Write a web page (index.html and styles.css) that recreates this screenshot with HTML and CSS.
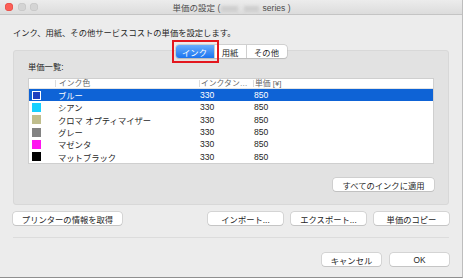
FILE: index.html
```html
<!DOCTYPE html>
<html lang="ja">
<head>
<meta charset="UTF-8">
<title>単価の設定</title>
<link rel="stylesheet" href="styles.css">
</head>
<body>
<div class="window">
  <div class="titlebar">
    <div class="lights">
      <span class="light close"></span>
      <span class="light"></span>
      <span class="light"></span>
    </div>
    <div class="title">単価の設定 (<span class="blur"><i></i><i></i></span> series )</div>
  </div>

  <div class="content">
    <p class="intro">インク、用紙、その他サービスコストの単価を設定します。</p>

    <div class="tabs-row">
      <div class="tabs">
        <span class="tab active">インク</span>
        <span class="tab">用紙</span>
        <span class="tab">その他</span>
      </div>
    </div>

    <div class="group">
      <div class="group-label">単価一覧:</div>
      <div class="table">
        <div class="row head">
          <span class="c-sw"></span>
          <span class="c-name">インク色</span>
          <span class="c-tank">インクタン…</span>
          <span class="c-price">単価 [¥]</span>
        </div>
        <div class="row selected">
          <span class="c-sw"><i class="sw" style="background:#1f3fbf"></i></span>
          <span class="c-name">ブルー</span>
          <span class="c-tank">330</span>
          <span class="c-price">850</span>
        </div>
        <div class="row">
          <span class="c-sw"><i class="sw" style="background:#16d0ff"></i></span>
          <span class="c-name">シアン</span>
          <span class="c-tank">330</span>
          <span class="c-price">850</span>
        </div>
        <div class="row">
          <span class="c-sw"><i class="sw" style="background:#bfbd8c"></i></span>
          <span class="c-name">クロマ オプティマイザー</span>
          <span class="c-tank">330</span>
          <span class="c-price">850</span>
        </div>
        <div class="row">
          <span class="c-sw"><i class="sw" style="background:#828282"></i></span>
          <span class="c-name">グレー</span>
          <span class="c-tank">330</span>
          <span class="c-price">850</span>
        </div>
        <div class="row">
          <span class="c-sw"><i class="sw" style="background:#ff14f0"></i></span>
          <span class="c-name">マゼンタ</span>
          <span class="c-tank">330</span>
          <span class="c-price">850</span>
        </div>
        <div class="row">
          <span class="c-sw"><i class="sw" style="background:#000000"></i></span>
          <span class="c-name">マットブラック</span>
          <span class="c-tank">330</span>
          <span class="c-price">850</span>
        </div>
      </div>
      <div class="apply-row">
        <button class="btn apply">すべてのインクに適用</button>
      </div>
    </div>

    <div class="actions">
      <button class="btn printer">プリンターの情報を取得</button>
      <span class="spacer"></span>
      <button class="btn wide">インポート...</button>
      <button class="btn wide">エクスポート...</button>
      <button class="btn wide">単価のコピー</button>
    </div>

    <div class="separator"></div>

    <div class="footer">
      <button class="btn ok">キャンセル</button>
      <button class="btn ok">OK</button>
    </div>
  </div>
</div>
</body>
</html>
```

FILE: styles.css
```css
body, html {
  margin: 0;
  padding: 0;
  font-family: 'Liberation Sans', 'Noto Sans CJK JP', sans-serif;
  font-size: 8.3px;
  color: #1e1e1e;
}

.window {
  width: 463px;
  height: 278px;
  box-sizing: border-box;
  background-color: #ececec;
  border-right: 1px solid #bdbdbd;
  border-bottom: 1px solid #8f8f8f;
  display: flex;
  flex-direction: column;
}

/* title bar */
.titlebar {
  height: 14px;
  display: flex;
  align-items: center;
  background: linear-gradient(#ececec, #dcdcdc);
  border-bottom: 1px solid #c4c4c4;
}
.lights {
  display: flex;
  gap: 4.5px;
  padding-left: 5px;
}
.light {
  width: 8px;
  height: 8px;
  border-radius: 50%;
  background-color: #d4d4d4;
  box-shadow: inset 0 0 0 0.5px #c2c2c2;
}
.light.close {
  background-color: #fc5f57;
  box-shadow: inset 0 0 0 0.5px #e0443e;
}
.title {
  flex: 1;
  text-align: center;
  color: #4d4d4d;
  font-size: 8.5px;
  margin-right: 37px;
}
.blur {
  display: inline-block;
  width: 40px;
  height: 8px;
  vertical-align: -1px;
}
.blur i {
  display: inline-block;
  height: 6px;
  margin-top: 1px;
  background-color: #cfcfcf;
  filter: blur(1.5px);
}
.blur i:first-child { width: 17px; margin-right: 6px; }
.blur i:last-child { width: 15px; }

/* content */
.content {
  padding: 0 13px;
  flex: 1;
  display: flex;
  flex-direction: column;
}
.intro {
  margin: 13px 0 0;
  height: 11px;
  line-height: 11px;
}

.tabs-row {
  display: flex;
  justify-content: center;
  margin-top: 6px;
  margin-bottom: -8px;
  position: relative;
  z-index: 1;
}
.tabs {
  display: flex;
  height: 13px;
  border-radius: 3px;
  background-color: #fff;
  box-shadow: 0 0 0 0.5px #b8b8b8, 0 0.5px 1px rgba(0,0,0,0.15);
}
.tab {
  display: flex;
  align-items: center;
  justify-content: center;
  height: 13px;
  border-left: 1px solid #cfcfcf;
}
.tab:nth-child(1) { width: 38px; border-left: none; }
.tab:nth-child(2) { width: 31px; }
.tab:nth-child(3) { width: 40px; }
.tab.active {
  color: #fff;
  border-radius: 3px 0 0 3px;
  background: linear-gradient(#6aaefc, #1b74f0);
  position: relative;
}
.tab.active::after {
  content: '';
  position: absolute;
  left: -4px;
  top: -5px;
  right: -5px;
  bottom: -5px;
  border: 2px solid #e3171e;
}

.group {
  background-color: #e2e2e2;
  border: 1px solid #d8d8d8;
  border-radius: 3px;
  padding: 11px 14px 13px;
}
.group-label {
  height: 10px;
  line-height: 10px;
  margin-bottom: 6px;
}

.table {
  background-color: #fff;
  border: 1px solid #cfcfcf;
  height: 84px;
}
.row {
  display: flex;
  align-items: center;
  height: 12.3px;
}
.row.head {
  height: 9px;
  border-bottom: 1px solid #e4e4e4;
  color: #666;
  font-size: 7.8px;
}
.row.head span {
  border-left: 1px solid #dcdcdc;
  height: 7px;
  line-height: 7px;
}
.row.head .c-sw { border-left: none; }
.row.selected {
  background-color: #0e63d6;
  color: #fff;
}
.c-sw {
  width: 26px;
  display: flex;
  padding-left: 3px;
  box-sizing: border-box;
}
.c-name {
  width: 144px;
  padding-left: 3px;
  box-sizing: border-box;
}
.c-tank {
  width: 54px;
  padding-left: 1px;
  box-sizing: border-box;
  font-size: 8.6px;
}
.c-price {
  flex: 1;
  padding-left: 1px;
  font-size: 8.6px;
}
.row.head .c-tank,
.row.head .c-price { font-size: 7.8px; }
.sw {
  width: 9px;
  height: 9px;
  box-sizing: border-box;
}
.selected .sw {
  border: 1px solid #fff;
}

.apply-row {
  display: flex;
  justify-content: flex-end;
  margin-top: 14px;
}

.btn {
  font-family: inherit;
  font-size: 8.3px;
  color: #1e1e1e;
  height: 13px;
  padding: 0;
  background-color: #fff;
  border: none;
  border-radius: 3px;
  box-shadow: 0 0 0 0.5px #bcbcbc, 0 1px 0.5px rgba(0,0,0,0.12);
}
.apply { width: 101px; }
.printer { width: 109px; }
.wide { width: 75px; margin-left: 8px; }
.ok { width: 59px; margin-left: 9px; }

.actions {
  display: flex;
  margin-top: 7px;
}
.spacer { flex: 1; }

.separator {
  height: 1px;
  background-color: #dcdcdc;
  margin-top: 12px;
}

.footer {
  display: flex;
  justify-content: flex-end;
  margin-top: 15px;
}
```
